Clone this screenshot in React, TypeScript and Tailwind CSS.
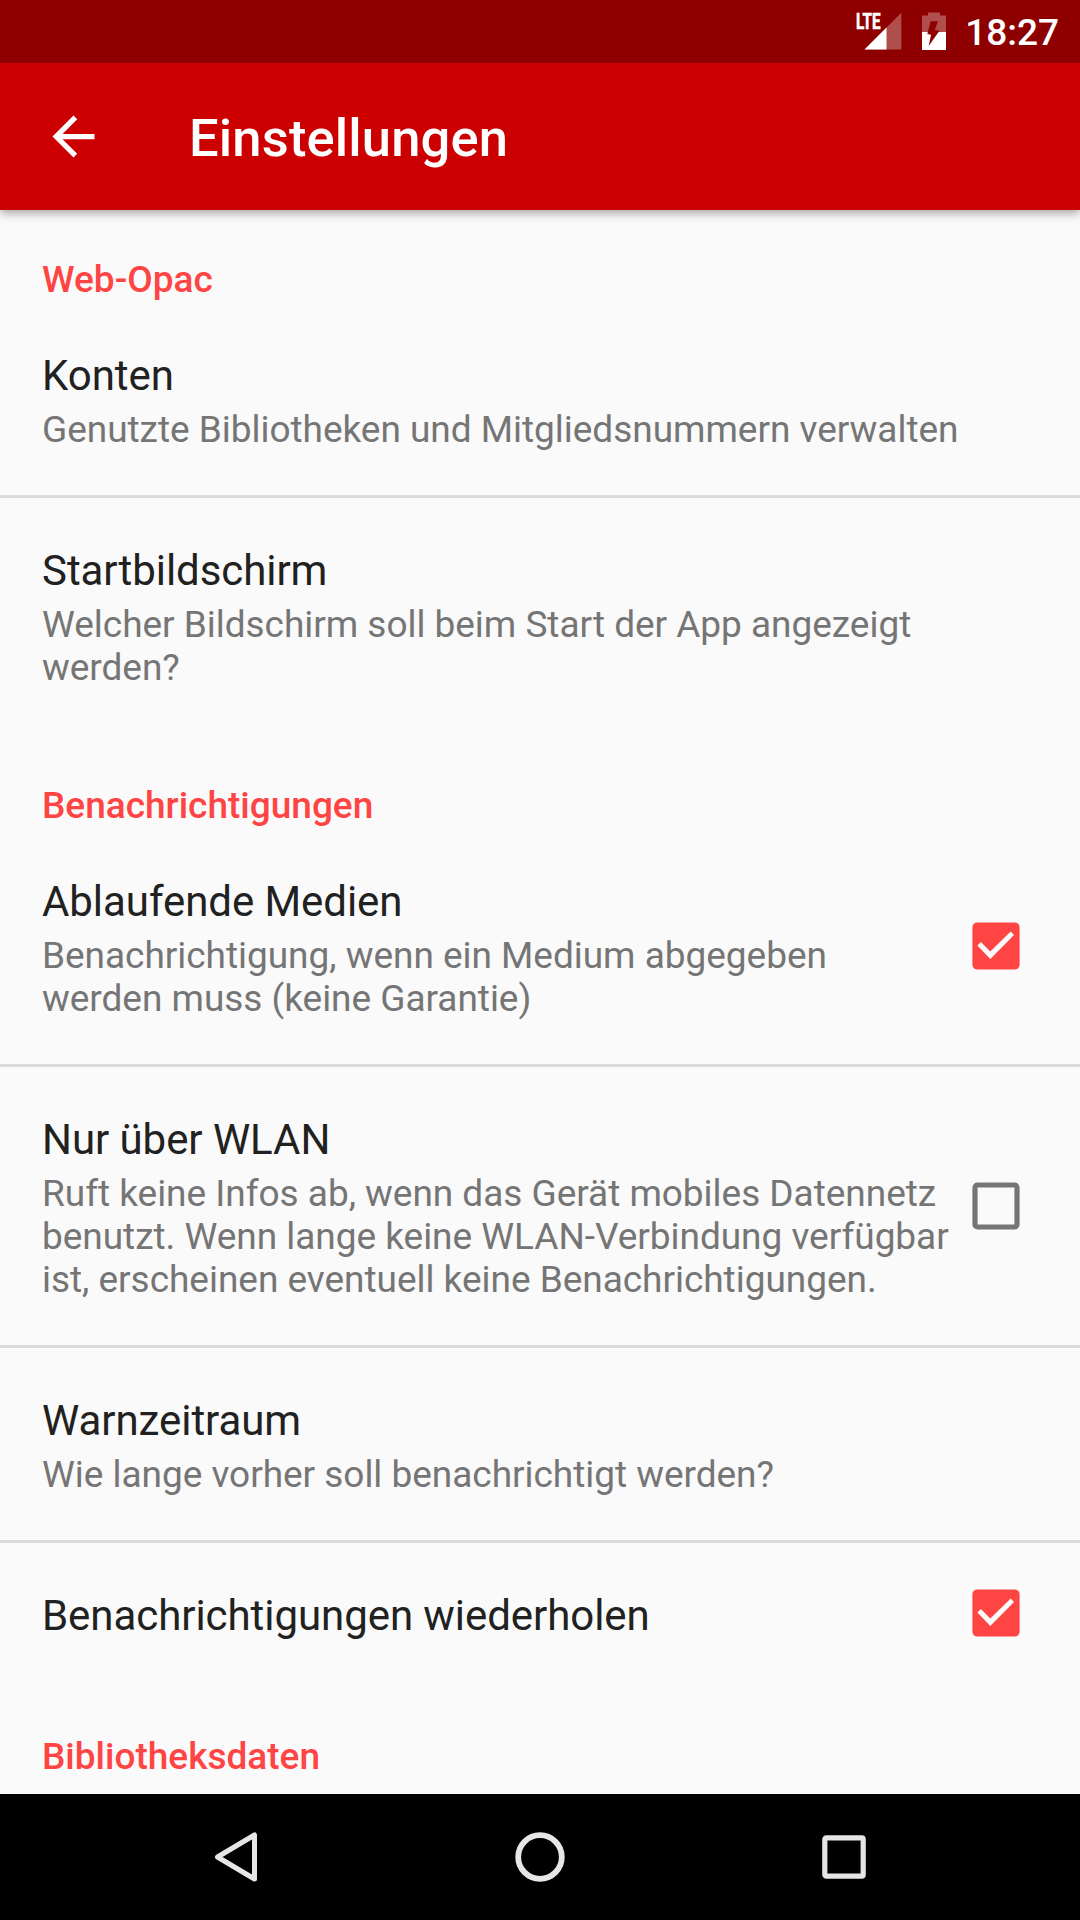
import React from 'react';

function Category({ children }: { children: string }) {
  return (
    <h2 className="h-[93px] px-[42px] pt-[45px] text-[37px] leading-[49px] font-medium text-[#ff4444]">{children}</h2>
  );
}

function Checkbox({ checked, className }: { checked: boolean; className: string }) {
  return (
    <svg viewBox="0 0 48 48" className={`h-12 w-12 shrink-0 ${className}`} role="checkbox" aria-checked={checked}>
      {checked ? (
        <>
          <rect x="0.4" y="0.4" width="47.2" height="47.2" rx="5" fill="#ff4444" />
          <path d="M5.400 23.500L8.900 20L18.300 29.600L38.700 9.500L42 13L18.300 36.900Z" fill="#fafafa" />
        </>
      ) : (
        <rect x="3" y="3" width="42" height="42" rx="2.500" fill="none" stroke="#757575" strokeWidth="5.200" />
      )}
    </svg>
  );
}

type RowProps = {
  title: string;
  lines?: string[];
  checked?: boolean;
  boxOffset?: string;
  className: string;
};

function Row({ title, lines = [], checked, boxOffset = '', className }: RowProps) {
  return (
    <div className={`flex items-start justify-between border-b-[3px] pr-[60px] pl-[42px] ${className}`}>
      <div className="pt-[45px] whitespace-nowrap">
        <div className="mb-1 text-[42px] leading-[56px] tracking-[-0.06px] text-[#212121]">{title}</div>
        {lines.map((line) => (
          <div key={line} className="text-[37px] leading-[43px] tracking-[-0.03px] text-[#757575]">
            {line}
          </div>
        ))}
      </div>
      {checked !== undefined && <Checkbox checked={checked} className={boxOffset} />}
    </div>
  );
}

export default function App() {
  return (
    <div className="flex h-[1920px] w-[1080px] flex-col overflow-hidden bg-[#fafafa] font-['Roboto',sans-serif]">
      <div className="z-20 flex h-[63px] shrink-0 items-center justify-end bg-[#8e0000] pr-[21px] text-white">
        <svg viewBox="0 0 50 63" className="mr-[20px] h-[63px] w-[50px]" fill="#fff">
          <path d="M49.300 12.700V49.500H12.500z" fillOpacity=".3" />
          <path d="M34.500 27.500V49.500H12.500z" />
          <text
            x="4"
            y="29.300"
            fontSize="22"
            fontWeight="700"
            stroke="#fff"
            strokeWidth="0.6"
            textLength="24.500"
            lengthAdjust="spacingAndGlyphs"
          >
            LTE
          </text>
        </svg>
        <svg viewBox="0 0 24 63" className="mr-[19px] h-[63px] w-6">
          <path d="M6 12.500h12v3h6V50H0V15.500h6z" fill="#fff" fillOpacity=".3" />
          <path d="M0 32h24v18H0z" fill="#fff" />
          <path d="M8.700 21.300H16L12.800 30L17.500 30.700L6.700 46L9 34.700L5.300 34z" fill="#8e0000" />
        </svg>
        <span className="pt-[3px] text-[37px] font-medium">18:27</span>
      </div>
      <header className="z-10 flex h-[147px] shrink-0 items-center bg-[#cc0000] pl-[42px] text-white shadow-[0_3px_9px_rgba(0,0,0,0.36)]">
        <svg viewBox="0 0 24 24" className="h-[63px] w-[63px]" fill="#fff">
          <path d="M20 11H7.830l5.590-5.590L12 4l-8 8 8 8 1.410-1.410L7.830 13H20z" />
        </svg>
        <h1 className="ml-[84px] pt-1 text-[52.5px] font-medium tracking-[0.15px]">Einstellungen</h1>
      </header>
      <main className="flex-1 overflow-hidden">
        <Category>Web-Opac</Category>
        <Row
          className="h-[195px] border-[#dadada]"
          title="Konten"
          lines={['Genutzte Bibliotheken und Mitgliedsnummern verwalten']}
        />
        <Row
          className="h-[238px] border-transparent"
          title="Startbildschirm"
          lines={['Welcher Bildschirm soll beim Start der App angezeigt', 'werden?']}
        />
        <Category>Benachrichtigungen</Category>
        <Row
          className="h-[238px] border-[#dadada]"
          checked
          boxOffset="mt-[93px]"
          title="Ablaufende Medien"
          lines={['Benachrichtigung, wenn ein Medium abgegeben', 'werden muss (keine Garantie)']}
        />
        <Row
          className="h-[281px] border-[#dadada]"
          checked={false}
          boxOffset="mt-[115px]"
          title="Nur über WLAN"
          lines={[
            'Ruft keine Infos ab, wenn das Gerät mobiles Datennetz',
            'benutzt. Wenn lange keine WLAN-Verbindung verfügbar',
            'ist, erscheinen eventuell keine Benachrichtigungen.',
          ]}
        />
        <Row
          className="h-[195px] border-[#dadada]"
          title="Warnzeitraum"
          lines={['Wie lange vorher soll benachrichtigt werden?']}
        />
        <Row className="h-[144px] border-transparent" checked boxOffset="mt-[46px]" title="Benachrichtigungen wiederholen" />
        <Category>Bibliotheksdaten</Category>
      </main>
      <nav className="flex h-[126px] shrink-0 items-center justify-between bg-black pr-[213px] pl-[214px]">
        <svg viewBox="0 0 44 50" className="h-[50px] w-11" fill="none" stroke="#e6e6e6" strokeWidth="5" strokeLinejoin="round">
          <path d="M40.500 3v44L3.500 25z" />
        </svg>
        <svg viewBox="0 0 50 50" className="h-[50px] w-[50px]" fill="none" stroke="#e6e6e6" strokeWidth="5.800">
          <circle cx="25" cy="25" r="21.800" />
        </svg>
        <svg viewBox="0 0 46 46" className="h-[46px] w-[46px]" fill="none" stroke="#e6e6e6" strokeWidth="5.200">
          <rect x="3.800" y="3.800" width="38.400" height="38.400" rx="1.500" />
        </svg>
      </nav>
    </div>
  );
}
